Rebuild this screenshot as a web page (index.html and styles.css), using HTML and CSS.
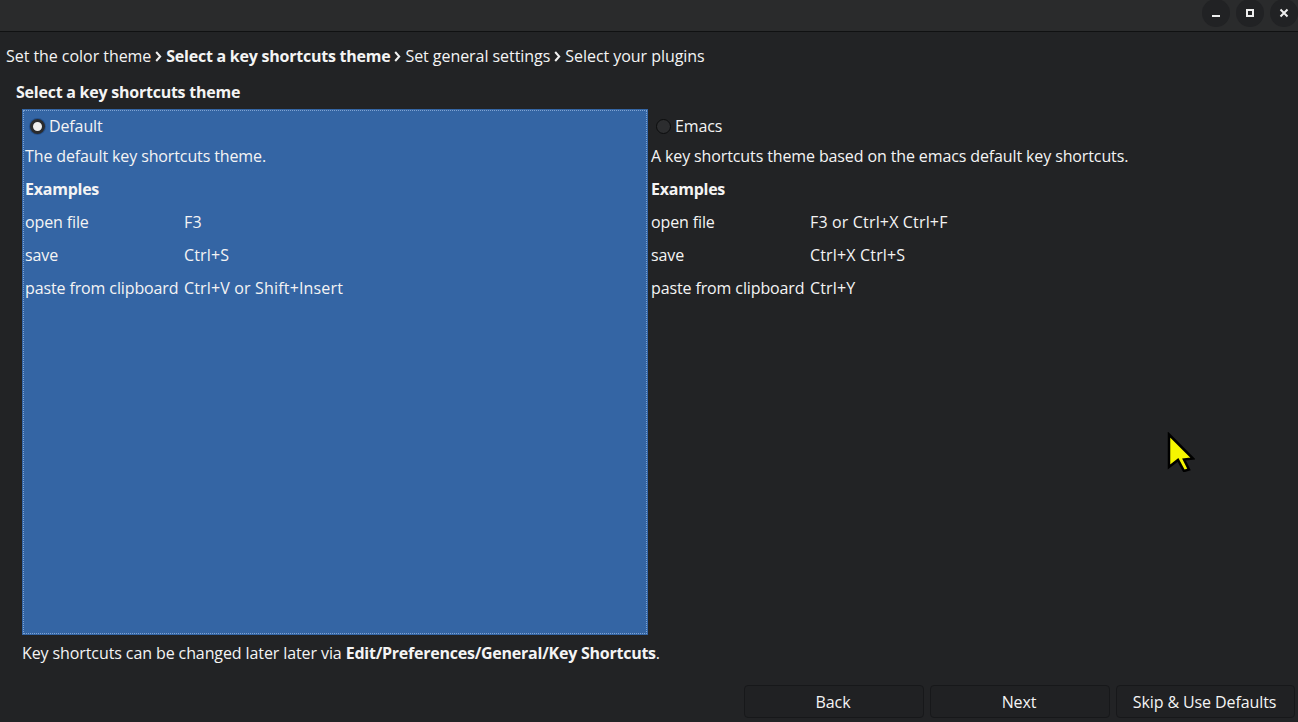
FILE: index.html
```html
<!DOCTYPE html>
<html lang="en">
<head>
<meta charset="utf-8">
<title>Key shortcuts theme</title>
<link rel="stylesheet" href="styles.css">
</head>
<body>
<div class="window">
  <header class="titlebar">
    <button class="winbtn" aria-label="Minimize"><svg width="12" height="12" viewBox="0 0 12 12"><rect x="2" y="8" width="8" height="2" fill="#eee"/></svg></button>
    <button class="winbtn" aria-label="Maximize"><svg width="12" height="12" viewBox="0 0 12 12"><path d="M3 3h6v6H3z" fill="none" stroke="#eee" stroke-width="2"/></svg></button>
    <button class="winbtn" aria-label="Close"><svg width="12" height="12" viewBox="0 0 12 12"><path d="M2.5 2.5l7 7M9.5 2.5l-7 7" fill="none" stroke="#eee" stroke-width="2"/></svg></button>
  </header>
  <nav class="crumbs">
    <span>Set the color theme</span>
    <svg class="sep" width="7" height="11" viewBox="0 0 7 11"><path d="M1.2 1l4 4.5-4 4.5" fill="none" stroke="#f0f0f0" stroke-width="2"/></svg>
    <b>Select a key shortcuts theme</b>
    <svg class="sep" width="7" height="11" viewBox="0 0 7 11"><path d="M1.2 1l4 4.5-4 4.5" fill="none" stroke="#f0f0f0" stroke-width="2"/></svg>
    <span>Set general settings</span>
    <svg class="sep" width="7" height="11" viewBox="0 0 7 11"><path d="M1.2 1l4 4.5-4 4.5" fill="none" stroke="#f0f0f0" stroke-width="2"/></svg>
    <span>Select your plugins</span>
  </nav>
  <main class="content">
    <h1 class="heading">Select a key shortcuts theme</h1>
    <div class="themes">
      <section class="theme selected">
        <div class="radio-row"><span class="radio on"></span><span>Default</span></div>
        <div class="line">The default key shortcuts theme.</div>
        <div class="line"><b>Examples</b></div>
        <div class="shortcuts">
          <span>open file</span><span class="keys">F3</span>
          <span>save</span><span class="keys">Ctrl+S</span>
          <span>paste from clipboard</span><span class="keys">Ctrl+V or Shift+Insert</span>
        </div>
      </section>
      <section class="theme">
        <div class="radio-row"><span class="radio"></span><span>Emacs</span></div>
        <div class="line">A key shortcuts theme based on the emacs default key shortcuts.</div>
        <div class="line"><b>Examples</b></div>
        <div class="shortcuts">
          <span>open file</span><span class="keys">F3 or Ctrl+X Ctrl+F</span>
          <span>save</span><span class="keys">Ctrl+X Ctrl+S</span>
          <span>paste from clipboard</span><span class="keys">Ctrl+Y</span>
        </div>
      </section>
    </div>
    <p class="note">Key shortcuts can be changed later later via <b>Edit/Preferences/General/Key Shortcuts</b>.</p>
  </main>
  <footer class="actions">
    <button class="btn">Back</button>
    <button class="btn">Next</button>
    <button class="btn btn-wide">Skip &amp; Use Defaults</button>
  </footer>
  <svg class="cursor" width="28" height="40" viewBox="0 0 28 40"><path d="M2 2.5l24 24-9 1 5 10-5 1.500-6-11-9 7z" fill="#f6f600" stroke="#000" stroke-width="2.500"/></svg>
</div>
</body>
</html>
```
FILE: styles.css
```css
* { box-sizing: border-box; }
html, body { margin: 0; height: 100%; }
body {
  background: #222325;
  color: #f4f4f4;
  font-family: "Open Sans", "Noto Sans", sans-serif;
  font-size: 16px;
  line-height: 20px;
  letter-spacing: -0.12px;
  overflow: hidden;
}
b { font-weight: 700; letter-spacing: -0.24px; }
.window { position: relative; width: 1298px; height: 722px; display: flex; flex-direction: column; }
.titlebar {
  height: 32px;
  flex: none;
  background: #2a2b2c;
  border-bottom: 1px solid #101112;
  display: flex;
  justify-content: flex-end;
  align-items: center;
  gap: 6px;
  padding: 0 0 6px 0;
}
.winbtn {
  width: 28px;
  height: 28px;
  border-radius: 50%;
  border: 0;
  padding: 0;
  background: #212224;
  display: flex;
  align-items: center;
  justify-content: center;
}
.crumbs { display: flex; align-items: center; padding: 0 0 0 6px; height: 48px; white-space: nowrap; letter-spacing: -0.05px; }
.crumbs .sep { margin: 0 4px; flex: none; }
.content { padding: 0 0 0 16px; flex: 1; }
.heading { margin: 2px 0 7px; font-size: 16px; line-height: 20px; font-weight: 700; letter-spacing: -0.24px; }
.themes { display: flex; margin-left: 6px; height: 526px; }
.theme { width: 626px; padding: 7px 3px 0; }
.theme.selected {
  background: #3465a4;
  outline: 1px dotted #7fa3d2;
  outline-offset: -2px;
}
.radio-row { display: flex; align-items: center; height: 20px; gap: 4px; padding-left: 5px; }
.radio {
  width: 15px;
  height: 15px;
  border-radius: 50%;
  background: #2c2d2f;
  border: 1px solid #0c0d0e;
  flex: none;
}
.radio.on { background: #eee; border: 3px solid #2a2b2d; box-shadow: 0 0 0 1px #24508c; }
.line { margin-top: 10px; height: 20px; }
.line + .line { margin-top: 13px; }
.shortcuts { display: grid; grid-template-columns: 159px auto; grid-auto-rows: 20px; row-gap: 13px; margin-top: 13px; white-space: nowrap; }
.keys { letter-spacing: 0.16px; }
.note { margin: 8px 0 0 6px; letter-spacing: -0.1px; }
.actions { display: flex; justify-content: flex-end; gap: 6px; padding: 0 3px 4px 0; flex: none; }
.btn {
  width: 180px;
  height: 33px;
  background: #202123;
  color: #f4f4f4;
  border: 1px solid #17181a;
  border-radius: 4px;
  font: inherit;
  letter-spacing: -0.1px;
  padding: 0 2px 0 0;
}
.btn-wide { width: 179px; }
.cursor { position: absolute; left: 1167px; top: 432px; }
```
